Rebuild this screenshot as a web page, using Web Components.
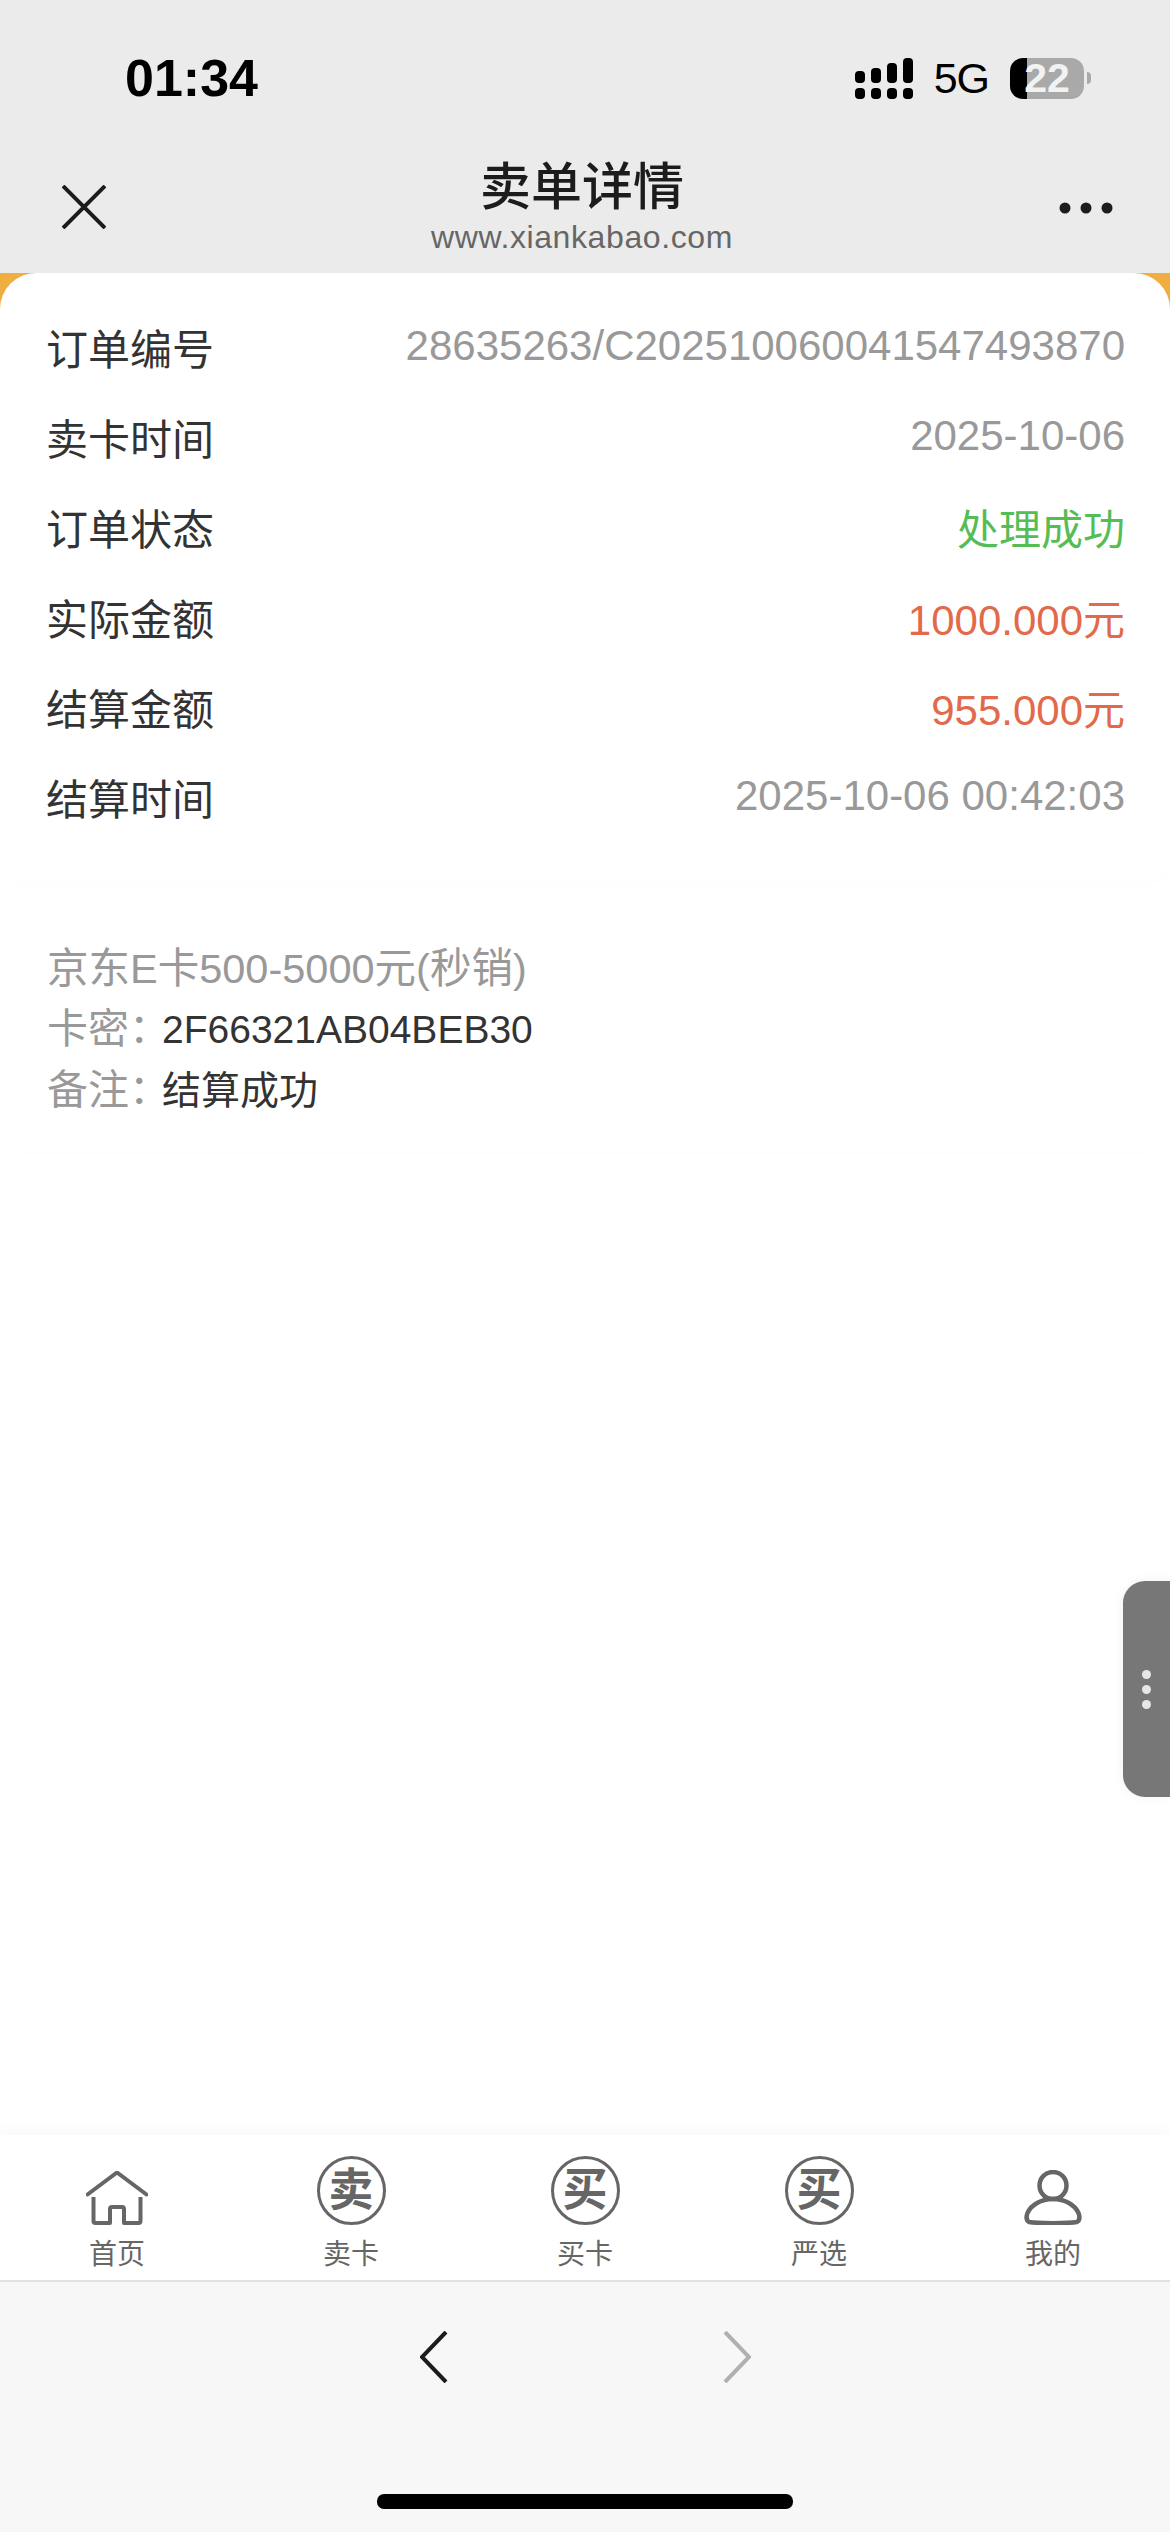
<!DOCTYPE html>
<html lang="zh">
<head>
<meta charset="utf-8">
<title>卖单详情</title>
<style>
    html, body { margin: 0; background: #fff; }
    body { font-family: "Liberation Sans", "Noto Sans CJK SC", sans-serif; }
</style>
</head>
<body>
<order-page>
    <status-bar time="01:34" network="5G" battery="22"></status-bar>
    <nav-header title="卖单详情" subtitle="www.xiankabao.com"></nav-header>
    <order-main>
        <info-card>
            <order-row label="订单编号" value="28635263/C202510060041547493870"></order-row>
            <order-row label="卖卡时间" value="2025-10-06"></order-row>
            <order-row label="订单状态" value="处理成功" tone="ok"></order-row>
            <order-row label="实际金额" value="1000.000元" tone="money"></order-row>
            <order-row label="结算金额" value="955.000元" tone="money"></order-row>
            <order-row label="结算时间" value="2025-10-06 00:42:03"></order-row>
        </info-card>
        <card-detail title="京东E卡500-5000元(秒销)">
            <detail-line label="卡密：" value="2F66321AB04BEB30"></detail-line>
            <detail-line label="备注：" value="结算成功"></detail-line>
        </card-detail>
        <side-handle></side-handle>
    </order-main>
    <tab-bar>
        <tab-item label="首页">
            <svg slot="icon" width="62" height="54" viewBox="0 0 62 54" fill="none" stroke="#666" stroke-width="4" stroke-linejoin="round">
                <path d="M1.500 23.500 31 1.500l29.500 22" stroke-linecap="round"/>
                <path d="M7.500 26v24a2 2 0 0 0 2 2H24V38a2 2 0 0 1 2-2h10a2 2 0 0 1 2 2v14h14.500a2 2 0 0 0 2-2V26"/>
            </svg>
        </tab-item>
        <tab-item label="卖卡"><round-glyph slot="icon">卖</round-glyph></tab-item>
        <tab-item label="买卡"><round-glyph slot="icon">买</round-glyph></tab-item>
        <tab-item label="严选"><round-glyph slot="icon">买</round-glyph></tab-item>
        <tab-item label="我的">
            <svg slot="icon" width="58" height="55" viewBox="0 0 58 55" fill="none" stroke="#666" stroke-width="4.500">
                <circle cx="29" cy="15.500" r="13.500"/>
                <path d="M5 52C2 50 2 47 3.500 43 7 35 17 29 29 29s22 6 25.500 14c1.500 4 1.500 7-1.500 9-9 1.500-39 1.500-48 0Z" stroke-linejoin="round"/>
            </svg>
        </tab-item>
    </tab-bar>
    <browser-bar></browser-bar>
</order-page>

<script>
class OrderPage extends HTMLElement {
    constructor() {
        super();
        this.attachShadow({mode: 'open'});
        this.shadowRoot.innerHTML = /*html*/`
        <style>
        :host {
            display: flex;
            flex-direction: column;
            height: 2532px;
            overflow: hidden;
            background: #fff;
        }
        </style>
        <slot></slot>
        `;
    }
}

class StatusBar extends HTMLElement {
    connectedCallback() {
        const time = this.getAttribute('time');
        const network = this.getAttribute('network');
        const battery = this.getAttribute('battery');
        this.attachShadow({mode: 'open'});
        this.shadowRoot.innerHTML = /*html*/`
        <style>
        :host {
            display: flex;
            justify-content: space-between;
            align-items: center;
            height: 130px;
            padding: 26px 79px 0 125px;
            box-sizing: border-box;
            background: #ebebeb;
            color: #000;
        }
        .time {
            font-size: 52px;
            font-weight: bold;
            line-height: 56px;
        }
        .right {
            display: flex;
            align-items: center;
        }
        .net {
            font-size: 43px;
            line-height: 44px;
            margin: 0 21px 0 21px;
            letter-spacing: -1px;
        }
        .battery {
            display: flex;
            align-items: center;
            justify-content: center;
            width: 74px;
            height: 41px;
            border-radius: 13px;
            background: linear-gradient(90deg, #000 17px, #a9a9a9 17px);
            color: #f2f2f2;
            font-size: 41px;
            font-weight: bold;
            line-height: 41px;
        }
        .nub {
            width: 4px;
            height: 12px;
            margin-left: 3px;
            border-radius: 0 4px 4px 0;
            background: #a9a9a9;
        }
        </style>
        <div class="time">${time}</div>
        <div class="right">
            <svg width="58" height="41" viewBox="0 0 58 41" fill="#000">
                <rect x="0" y="13" width="10" height="12" rx="4"/>
                <rect x="16" y="10" width="10" height="15" rx="4"/>
                <rect x="32" y="5" width="10" height="20" rx="4"/>
                <rect x="48" y="0" width="10" height="25" rx="4"/>
                <rect x="0" y="30" width="10" height="11" rx="4"/>
                <rect x="16" y="30" width="10" height="11" rx="4"/>
                <rect x="32" y="30" width="10" height="11" rx="4"/>
                <rect x="48" y="30" width="10" height="11" rx="4"/>
            </svg>
            <div class="net">${network}</div>
            <div class="battery">${battery}</div>
            <div class="nub"></div>
        </div>
        `;
    }
}

class NavHeader extends HTMLElement {
    connectedCallback() {
        this.attachShadow({mode: 'open'});
        this.shadowRoot.innerHTML = /*html*/`
        <style>
        :host {
            display: grid;
            grid-template-columns: 1fr auto 1fr;
            height: 143px;
            padding: 27px 66px 0 60px;
            box-sizing: border-box;
            background: #ebebeb;
        }
        .center {
            display: flex;
            flex-direction: column;
            align-items: center;
        }
        .title {
            font-size: 51px;
            line-height: 62px;
            font-weight: 500;
            color: #1c1c1c;
        }
        .sub {
            font-size: 32px;
            line-height: 36px;
            color: #666;
            letter-spacing: 0.6px;
        }
        .close {
            margin: 28px 0 0 2px;
        }
        .more {
            justify-self: end;
            margin: 45px -9px 0 0;
        }
        </style>
        <svg class="close" width="44" height="44" viewBox="0 0 44 44" fill="none" stroke="#1c1c1c" stroke-width="4">
            <path d="M1 1 43 43M43 1 1 43"/>
        </svg>
        <div class="center">
            <div class="title">${this.getAttribute('title')}</div>
            <div class="sub">${this.getAttribute('subtitle')}</div>
        </div>
        <svg class="more" width="54" height="12" viewBox="0 0 54 12" fill="#1c1c1c">
            <circle cx="6" cy="6" r="5.500"/>
            <circle cx="27" cy="6" r="5.500"/>
            <circle cx="48" cy="6" r="5.500"/>
        </svg>
        `;
    }
}

class OrderMain extends HTMLElement {
    constructor() {
        super();
        this.attachShadow({mode: 'open'});
        this.shadowRoot.innerHTML = /*html*/`
        <style>
        :host {
            display: block;
            flex: 1;
            position: relative;
            background: linear-gradient(#f0ad40 40px, #fff 40px);
        }
        </style>
        <slot></slot>
        `;
    }
}

class InfoCard extends HTMLElement {
    constructor() {
        super();
        this.attachShadow({mode: 'open'});
        this.shadowRoot.innerHTML = /*html*/`
        <style>
        :host {
            display: block;
            padding: 28px 45px 40px 46px;
            border-radius: 36px 36px 24px 24px;
            background: #fff;
            box-shadow: 0 2px 16px rgba(0,0,0,0.012);
        }
        </style>
        <slot></slot>
        `;
    }
}

class OrderRow extends HTMLElement {
    connectedCallback() {
        this.attachShadow({mode: 'open'});
        this.shadowRoot.innerHTML = /*html*/`
        <style>
        :host {
            display: flex;
            justify-content: space-between;
            align-items: center;
            height: 90px;
            font-size: 42px;
            color: #333;
        }
        .value {
            color: #999;
        }
        :host([tone="ok"]) .value {
            color: #55bd55;
        }
        :host([tone="money"]) .value {
            color: #e2694a;
        }
        </style>
        <div>${this.getAttribute('label')}</div>
        <div class="value">${this.getAttribute('value')}</div>
        `;
    }
}

class CardDetail extends HTMLElement {
    connectedCallback() {
        this.attachShadow({mode: 'open'});
        this.shadowRoot.innerHTML = /*html*/`
        <style>
        :host {
            display: block;
            margin-top: 25px;
            padding: 33px 47px 30px;
            border-radius: 24px;
            background: #fff;
            box-shadow: 0 0 20px rgba(0,0,0,0.012);
        }
        .title {
            font-size: 41.500px;
            line-height: 60px;
            color: #999;
        }
        </style>
        <div class="title">${this.getAttribute('title')}</div>
        <slot></slot>
        `;
    }
}

class DetailLine extends HTMLElement {
    connectedCallback() {
        this.attachShadow({mode: 'open'});
        this.shadowRoot.innerHTML = /*html*/`
        <style>
        :host {
            display: flex;
            align-items: baseline;
            font-size: 39px;
            line-height: 60px;
            color: #333;
        }
        .label {
            width: 115px;
            flex: none;
            font-size: 41px;
            color: #999;
            white-space: nowrap;
        }
        </style>
        <div class="label">${this.getAttribute('label')}</div>
        <div>${this.getAttribute('value')}</div>
        `;
    }
}

class SideHandle extends HTMLElement {
    constructor() {
        super();
        this.attachShadow({mode: 'open'});
        this.shadowRoot.innerHTML = /*html*/`
        <style>
        :host {
            position: absolute;
            top: 1308px;
            right: 0;
            display: flex;
            flex-direction: column;
            align-items: center;
            justify-content: center;
            gap: 6px;
            width: 47px;
            height: 216px;
            border-radius: 22px 0 0 22px;
            background: #777;
            box-shadow: 0 0 12px rgba(0,0,0,0.06);
        }
        i {
            width: 9px;
            height: 9px;
            border-radius: 50%;
            background: #e6e6e6;
        }
        </style>
        <i></i><i></i><i></i>
        `;
    }
}

class TabBar extends HTMLElement {
    constructor() {
        super();
        this.attachShadow({mode: 'open'});
        this.shadowRoot.innerHTML = /*html*/`
        <style>
        :host {
            display: grid;
            grid-template-columns: repeat(5, 1fr);
            height: 147px;
            box-sizing: border-box;
            background: #fff;
            border-bottom: 2px solid #e2e2e2;
            box-shadow: 0 -6px 14px rgba(0,0,0,0.025);
            position: relative;
        }
        </style>
        <slot></slot>
        `;
    }
}

class TabItem extends HTMLElement {
    connectedCallback() {
        this.attachShadow({mode: 'open'});
        this.shadowRoot.innerHTML = /*html*/`
        <style>
        :host {
            display: flex;
            flex-direction: column;
            align-items: center;
            padding-top: 26px;
            color: #666;
        }
        .icon {
            display: flex;
            align-items: flex-end;
            justify-content: center;
            height: 69px;
            padding-bottom: 5px;
            box-sizing: border-box;
        }
        :host(:has(round-glyph)) .icon {
            padding-bottom: 0;
        }
        .label {
            margin-top: 7px;
            font-size: 28px;
            line-height: 36px;
        }
        </style>
        <div class="icon"><slot name="icon"></slot></div>
        <div class="label">${this.getAttribute('label')}</div>
        `;
    }
}

class RoundGlyph extends HTMLElement {
    constructor() {
        super();
        this.attachShadow({mode: 'open'});
        this.shadowRoot.innerHTML = /*html*/`
        <style>
        :host {
            display: flex;
            align-items: center;
            justify-content: center;
            width: 69px;
            height: 69px;
            box-sizing: border-box;
            border: 3.500px solid #666;
            border-radius: 50%;
            color: #666;
            font-size: 45px;
            font-weight: 700;
            line-height: 1;
        }
        </style>
        <slot></slot>
        `;
    }
}

class BrowserBar extends HTMLElement {
    constructor() {
        super();
        this.attachShadow({mode: 'open'});
        this.shadowRoot.innerHTML = /*html*/`
        <style>
        :host {
            display: flex;
            flex-direction: column;
            align-items: center;
            flex: none;
            height: 250px;
            box-sizing: border-box;
            padding-top: 49px;
            background: #f7f7f7;
        }
        .arrows {
            display: flex;
            gap: 275px;
            margin-left: 1px;
        }
        .home {
            width: 416px;
            height: 15px;
            margin-top: 111px;
            border-radius: 7px;
            background: #000;
        }
        </style>
        <div class="arrows">
            <svg width="28" height="52" viewBox="0 0 28 52" fill="none" stroke="#1c1c1c" stroke-width="4">
                <path d="M26 1 2 26l24 25"/>
            </svg>
            <svg width="28" height="52" viewBox="0 0 28 52" fill="none" stroke="#b0b0b0" stroke-width="4">
                <path d="M2 1l24 25L2 51"/>
            </svg>
        </div>
        <div class="home"></div>
        `;
    }
}

customElements.define('order-page', OrderPage);
customElements.define('status-bar', StatusBar);
customElements.define('nav-header', NavHeader);
customElements.define('order-main', OrderMain);
customElements.define('info-card', InfoCard);
customElements.define('order-row', OrderRow);
customElements.define('card-detail', CardDetail);
customElements.define('detail-line', DetailLine);
customElements.define('side-handle', SideHandle);
customElements.define('tab-bar', TabBar);
customElements.define('tab-item', TabItem);
customElements.define('round-glyph', RoundGlyph);
customElements.define('browser-bar', BrowserBar);
</script>
</body>
</html>
